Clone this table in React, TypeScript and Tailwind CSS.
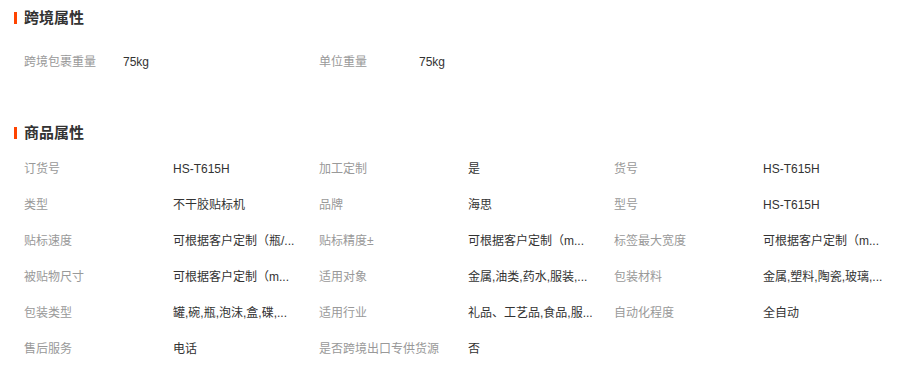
import React from "react";

const font = { fontFamily: '"Liberation Sans", "Noto Sans CJK SC", sans-serif' };

function Title({ text }: { text: string }) {
  return (
    <div className="flex h-[20px] items-center pl-[14px]">
      <span className="mr-[7px] h-[12px] w-[3px] bg-[#ff4400]" />
      <span className="text-[15px] font-bold leading-[20px] text-[#333]">{text}</span>
    </div>
  );
}

type Pair = [string, string];

function Cell({ pair, labelW }: { pair: Pair; labelW: string }) {
  return (
    <div className="flex h-[36px] w-[295px] items-center text-[12px]">
      <div className={`${labelW} shrink-0 whitespace-nowrap text-[#999]`}>{pair[0]}</div>
      <div className="w-[130px] whitespace-nowrap text-[#333]">{pair[1]}</div>
    </div>
  );
}

const attrs: Pair[] = [
  ["订货号", "HS-T615H"],
  ["加工定制", "是"],
  ["货号", "HS-T615H"],
  ["类型", "不干胶贴标机"],
  ["品牌", "海思"],
  ["型号", "HS-T615H"],
  ["贴标速度", "可根据客户定制（瓶/..."],
  ["贴标精度±", "可根据客户定制（m..."],
  ["标签最大宽度", "可根据客户定制（m..."],
  ["被贴物尺寸", "可根据客户定制（m..."],
  ["适用对象", "金属,油类,药水,服装,..."],
  ["包装材料", "金属,塑料,陶瓷,玻璃,..."],
  ["包装类型", "罐,碗,瓶,泡沫,盒,碟,..."],
  ["适用行业", "礼品、工艺品,食品,服..."],
  ["自动化程度", "全自动"],
  ["售后服务", "电话"],
  ["是否跨境出口专供货源", "否"],
];

export default function App() {
  return (
    <div className="h-[370px] w-[903px] bg-white pt-[8px]" style={font}>
      <Title text="跨境属性" />
      <div className="mt-[16px] flex pl-[24px]">
        <Cell pair={["跨境包裹重量", "75kg"]} labelW="w-[99px]" />
        <Cell pair={["单位重量", "75kg"]} labelW="w-[100px]" />
      </div>
      <div className="mt-[43px]">
        <Title text="商品属性" />
      </div>
      <div className="mt-[8px] grid w-[909px] grid-cols-3 pl-[24px]">
        {attrs.map((p, i) => (
          <Cell key={i} pair={p} labelW="w-[149px]" />
        ))}
      </div>
    </div>
  );
}
